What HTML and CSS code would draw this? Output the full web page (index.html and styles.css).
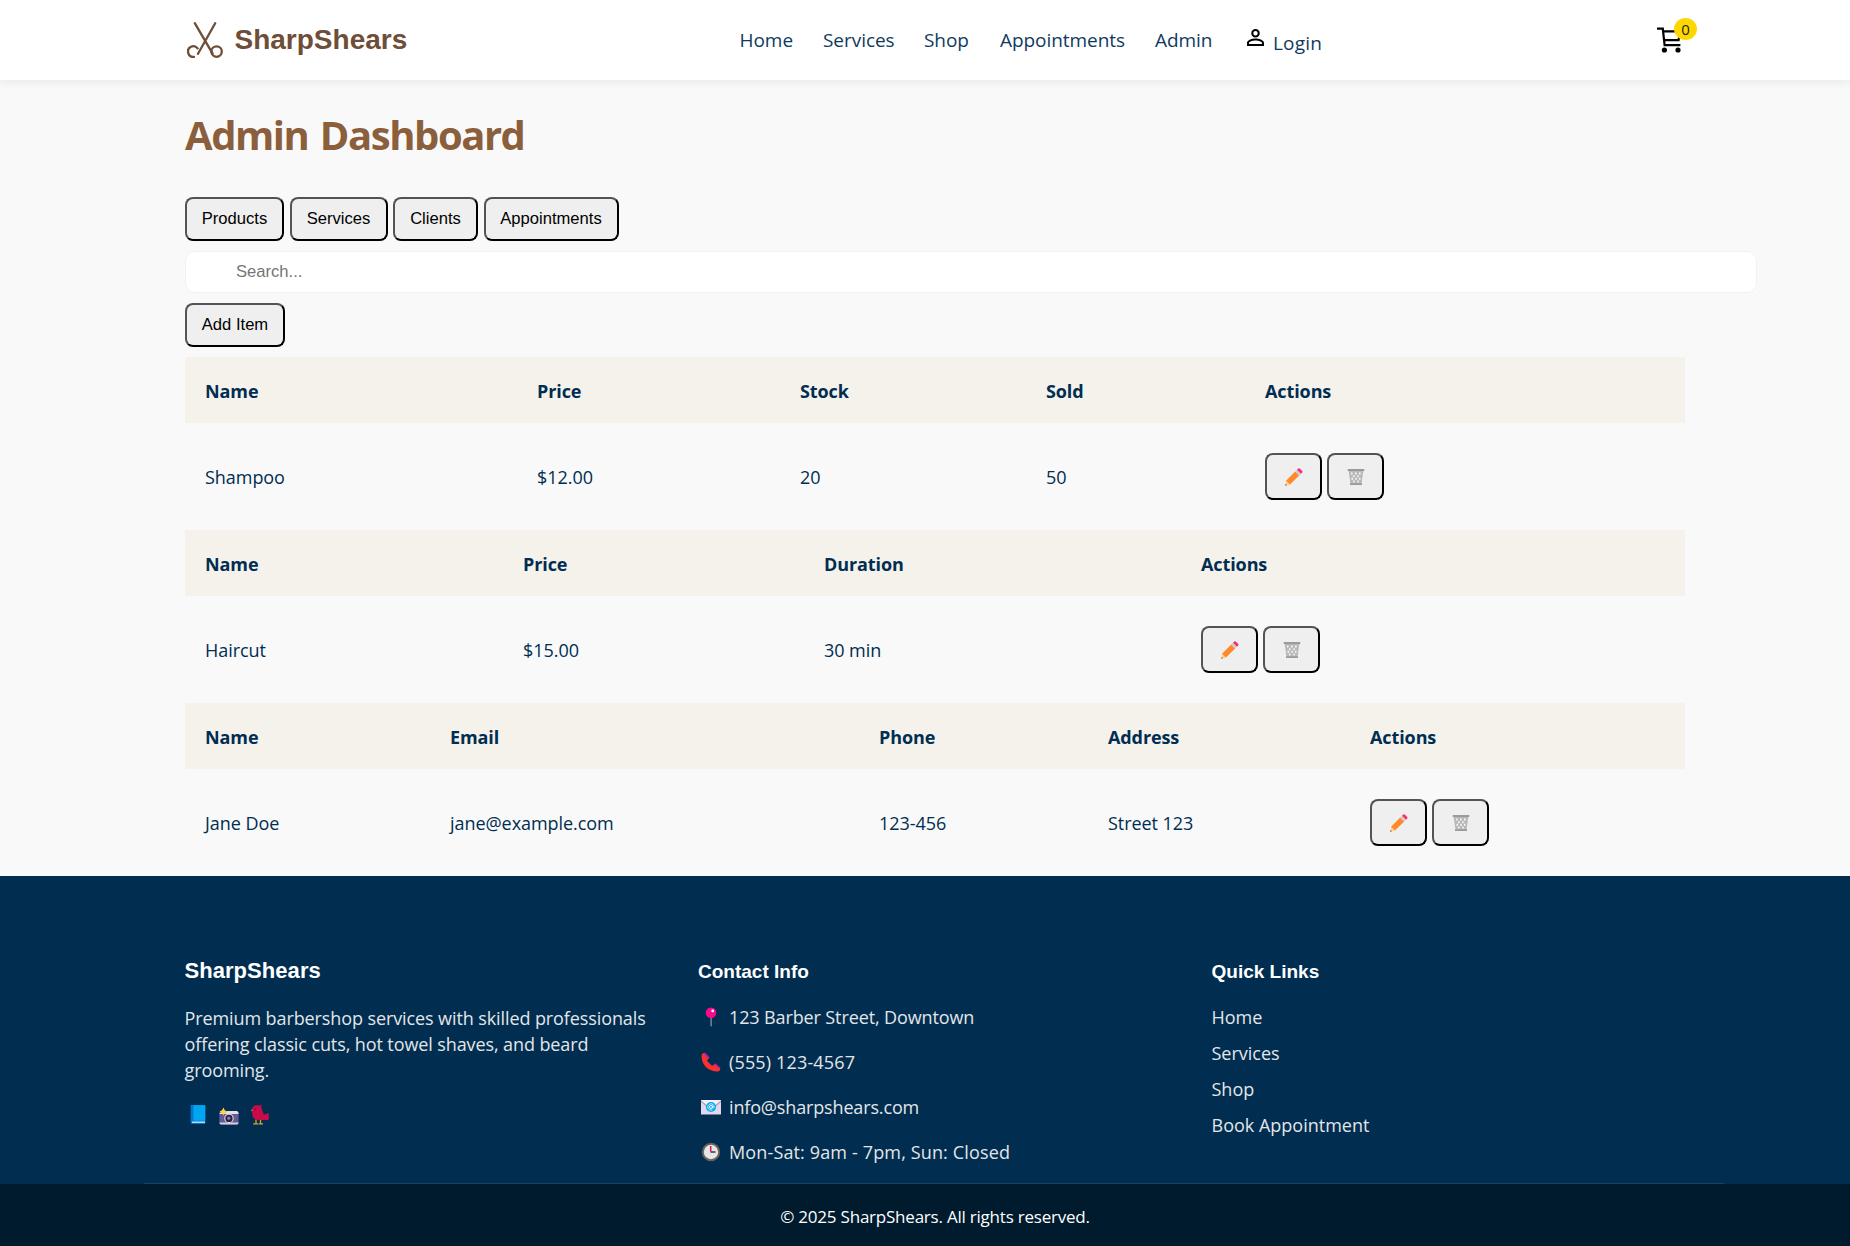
FILE: index.html
```html
<!DOCTYPE html>
<html lang="en">
<head>
<meta charset="utf-8">
<title>SharpShears - Admin Dashboard</title>
<link rel="stylesheet" href="styles.css">
</head>
<body>
<svg class="sprite" width="0" height="0" aria-hidden="true">
  <symbol id="pencil" viewBox="0 0 18 18">
    <path d="M1 12.5 4.8 16.2 1 17.5z" fill="#ffc983"/>
    <path d="M1 12.7 10.2 3.6 14.2 7.6 5 16.6z" fill="#ff8a2b"/>
    <path d="M1 12.7 5 16.6 3 17 1 16.3z" fill="#ffce7c"/>
    <path d="M.4 16 1.9 17.3.4 17.8z" fill="#444"/>
    <path d="M10.2 3.6 12 1.8 16 5.8 14.2 7.6z" fill="#cfc8d8"/>
    <path d="M12 1.8 13.4.6q.8-.6 1.6.1l2.2 2.2q.7.8 0 1.6L16 5.8z" fill="#fc2f63"/>
  </symbol>
  <symbol id="trash" viewBox="0 0 18 18">
    <path d="M1.6 2.5H16.4L14.4 16.5H3.6z" fill="#b8b8b8"/>
    <path d="M4 4.5h1.5v2H4zM8 4.5h1.7v2H8zM12 4.5h1.7v2H12zM6 7.2h1.5v2H6zM10.3 7.2h1.500v2h-1.500zM4.5 9.8H6v2H4.5zM8.2 9.800h1.600v2H8.200zM12 9.800h1.500v2H12zM6 12.400h1.500v2H6zM10.300 12.400h1.500v2h-1.500z" fill="#f7f7f7"/>
    <path d="M.7 1h16.6v1.9H.7zM3 15.2h12v1.9H3z" fill="#9b9b9b"/>
  </symbol>
</svg>

<header class="header">
  <div class="header-inner">
    <a class="logo">
      <svg class="logo-icon" viewBox="0 0 36 36" fill="none" stroke="#6f4e37" stroke-width="2.3" stroke-linecap="round">
        <path d="M7.8 1.200 25.600 31.600M28.200 1.200 11 31.800"/>
        <circle cx="29.600" cy="29.600" r="5.200"/>
        <path d="M7 34.800A5.300 5.300 0 1 1 10.600 26.400"/>
      </svg>
      <span>SharpShears</span>
    </a>
    <nav class="nav">
      <a class="n1">Home</a><a class="n2">Services</a><a class="n3">Shop</a><a class="n4">Appointments</a><a class="n5">Admin</a>
      <a class="login">
        <svg class="user-icon" viewBox="4 4 16 16"><path d="M12 5.9a2.1 2.1 0 1 1 0 4.2 2.1 2.1 0 0 1 0-4.2m0 9c2.97 0 6.1 1.46 6.1 2.1v1.1H5.9V17c0-.64 3.13-2.1 6.1-2.1M12 4C9.79 4 8 5.79 8 8s1.79 4 4 4 4-1.79 4-4-1.79-4-4-4m0 9c-2.67 0-8 1.34-8 4v3h16v-3c0-2.66-5.33-4-8-4"/></svg><span>Login</span>
      </a>
    </nav>
    <a class="cart">
      <svg class="cart-icon" viewBox="0 0 24 26">
        <path d="M0 1.6H5.8L7.600 18.200H23.400M6 4.400H23L21.600 13.200H7" fill="none" stroke="#000" stroke-width="2.200"/>
        <circle cx="7.400" cy="23" r="2.600"/><circle cx="21" cy="23" r="2.600"/>
      </svg>
      <span class="badge">0</span>
    </a>
  </div>
</header>

<main class="main">
  <h1>Admin Dashboard</h1>
  <div class="tabs">
    <button class="w1">Products</button><button class="w2">Services</button><button class="w3">Clients</button><button class="w4">Appointments</button>
  </div>
  <input class="search" type="text" placeholder="Search...">
  <button class="add">Add Item</button>

  <table>
    <colgroup><col class="a1"><col class="a2"><col class="a3"><col class="a4"><col></colgroup>
    <thead><tr><th>Name</th><th>Price</th><th>Stock</th><th>Sold</th><th>Actions</th></tr></thead>
    <tbody><tr><td>Shampoo</td><td>$12.00</td><td>20</td><td>50</td>
      <td><div class="actions"><button><svg><use href="#pencil"/></svg></button><button><svg><use href="#trash"/></svg></button></div></td></tr></tbody>
  </table>
  <table>
    <colgroup><col class="b1"><col class="b2"><col class="b3"><col></colgroup>
    <thead><tr><th>Name</th><th>Price</th><th>Duration</th><th>Actions</th></tr></thead>
    <tbody><tr><td>Haircut</td><td>$15.00</td><td>30 min</td>
      <td><div class="actions"><button><svg><use href="#pencil"/></svg></button><button><svg><use href="#trash"/></svg></button></div></td></tr></tbody>
  </table>
  <table>
    <colgroup><col class="c1"><col class="c2"><col class="c3"><col class="c4"><col></colgroup>
    <thead><tr><th>Name</th><th>Email</th><th>Phone</th><th>Address</th><th>Actions</th></tr></thead>
    <tbody><tr><td>Jane Doe</td><td>jane@example.com</td><td>123-456</td><td>Street 123</td>
      <td><div class="actions"><button><svg><use href="#pencil"/></svg></button><button><svg><use href="#trash"/></svg></button></div></td></tr></tbody>
  </table>
</main>

<footer class="footer">
  <div class="footer-grid">
    <section class="about">
      <h3>SharpShears</h3>
      <p>Premium barbershop services with skilled professionals<br>offering classic cuts, hot towel shaves, and beard<br>grooming.</p>
      <div class="social">
        <svg viewBox="0 0 20 20"><path d="M2.6 0H17v19H4.200q-1.600 0-1.600-1.600z" fill="#0078c8"/><path d="M5.400.2H17.400V15.800H5.400z" fill="#00a6f0"/><path d="M4 16.600H17.200v1.200H4z" fill="#e8f2fa"/></svg>
        <svg viewBox="0 0 20 20"><path d="M.4 7.400H19.600V18q0 1.400-1.400 1.400H1.800Q.4 19.400.4 18z" fill="#635994"/><path d="M.4 9q0-1.800 1.800-1.800H7L8 6h9.500q2 0 2.100 3z" fill="#e4e0e8"/><path d="M.4 17.600H19.600q0 1.800-1.400 1.800H1.800q-1.400 0-1.400-1.800z" fill="#d6cfdc"/><circle cx="10" cy="13.400" r="4.800" fill="#d7d0df"/><circle cx="10" cy="13.400" r="3.600" fill="#2a2240"/><circle cx="9.800" cy="13.200" r="1.600" fill="#8d7dbd"/><path d="M4.400 2.600 5.800 5.200 8.400 6.500 5.800 7.800 4.400 10.400 3 7.800.4 6.500 3 5.200z" fill="#ffd13b"/></svg>
        <svg viewBox="0 0 20 20"><path d="M6 14.500V18.600M10.500 14.500V18.600M3.200 18.800H8M8.500 18.800H13" stroke="#dba32b" stroke-width="1.300" fill="none"/><path d="M.8 5.200 3 3.700V6.500z" fill="#ffc52e"/><path d="M5.800.2H12q-1.200 1-.4 3L13.800 9.800 18.800 8V14.400Q18 15.400 14.800 15H8Q2.400 14.600 2.200 9V4Q2.600.6 5.800.2" fill="#ca0b4a"/><circle cx="5.400" cy="4.200" r=".8" fill="#1c1c1c"/></svg>
      </div>
    </section>
    <section>
      <h4>Contact Info</h4>
      <ul class="contact">
        <li><svg viewBox="0 0 20 20"><path d="M9.500 9h1.200V19.200H9.500z" fill="#9c9aa3"/><circle cx="10" cy="5.800" r="5.300" fill="#f70a8d"/><circle cx="11.700" cy="3.900" r="1.400" fill="#fff"/></svg><span class="address">123 Barber Street, Downtown</span></li>
        <li><svg viewBox="0 0 20 20"><path d="M2 1.200 4 .4 8.600 5.400 6.500 8zM12.300 13 14.300 11.200 19.500 15.800 18.600 18z" fill="#b4249b"/><path d="M.8 2.600Q1.600.9 2.600 1.300L7 6.800Q5.600 8.400 6.600 9.500L10.700 13.400Q12 14 13.200 12.800L19 17Q19.500 19 17 19.400 9.500 19.500 4.500 14.700-.4 9 .8 2.600" fill="#f8312f"/></svg><span class="phone">(555) 123-4567</span></li>
        <li><svg viewBox="0 0 20 20"><path d="M0 3H20V17.500H0z" fill="#e1d8ec"/><path d="M0 3 10 11 20 3V5L12 12.500H8L0 5z" fill="#b4acbc"/><path d="M0 3H20L12 10H8z" fill="#f3eef8"/><circle cx="10" cy="10" r="5" fill="#00a6ed"/><circle cx="10" cy="10" r="1.500" fill="none" stroke="#fff"/><path d="M11.600 8.500V10.600Q12.800 12 13.200 10A3.200 3.200 0 1 0 11.500 12.800" fill="none" stroke="#fff" stroke-width=".8"/></svg><span class="email">info@sharpshears.com</span></li>
        <li><svg viewBox="0 0 20 20"><circle cx="10" cy="10" r="9.200" fill="#68625f"/><circle cx="10" cy="10" r="7.200" fill="#e6e6e6"/><path d="M9.700 4V9.500" stroke="#f70a55" stroke-width="1.500"/><path d="M9.500 10H14.500" stroke="#222" stroke-width="1.300"/></svg><span class="hours">Mon-Sat: 9am - 7pm, Sun: Closed</span></li>
      </ul>
    </section>
    <section>
      <h4>Quick Links</h4>
      <ul class="links"><li>Home</li><li>Services</li><li>Shop</li><li>Book Appointment</li></ul>
    </section>
  </div>
  <div class="footer-bottom"><p>© 2025 SharpShears. All rights reserved.</p></div>
</footer>
</body>
</html>
```

FILE: styles.css
```css
* { box-sizing: border-box; margin: 0; padding: 0; }
html { font-size: 18px; }
body {
  font-family: "Open Sans", "Noto Sans", sans-serif;
  font-size: 18px;
  letter-spacing: -0.05px;
  color: #002d52;
  background: #f9f9f9;
  overflow: hidden;
}
.sprite { display: block; }
ul { list-style: none; }

.header {
  position: relative;
  height: 80px;
  background: #fff;
  box-shadow: 0 2px 10px rgba(0, 0, 0, .07);
}
.header-inner { display: flex; height: 80px; padding-left: 187px; }
.logo {
  display: flex;
  align-items: center;
  width: 552.5px;
  font: bold 28px "Liberation Sans", Arial, sans-serif;
  letter-spacing: 0;
  color: #6f4e37;
}
.logo-icon { width: 36px; height: 36px; margin-right: 11.5px; }
.nav { display: flex; width: 917.5px; font-size: 19px; line-height: 80px; gap: 30px; color: #0f3a60; }
.nav a { white-space: nowrap; }
.n1 { width: 53.5px; }
.n2 { width: 71px; }
.n3 { width: 46px; }
.n4 { width: 125px; }
.n5 { width: 58px; }
.login { display: flex; padding-left: 4px; line-height: 86px; letter-spacing: .2px; }
.user-icon { width: 17px; height: 17px; margin: 29px 9px 0 0; fill: #000; }
.cart { position: relative; width: 40px; }
.cart-icon { display: block; width: 24px; height: 26px; margin-top: 27px; }
.badge {
  position: absolute;
  left: 17px;
  top: 18px;
  width: 23px;
  height: 22px;
  border-radius: 50%;
  background: #ffd700;
  color: #222;
  font-size: 15px;
  line-height: 22px;
  text-align: center;
}

.main { width: 1500px; margin-left: 185px; }
h1 { padding-top: 24px; height: 117px; font-size: 40px; line-height: 61px; letter-spacing: -1.45px; word-spacing: 2.5px; color: #8b5e3c; }
button {
  display: block;
  height: 44px;
  border: 2px outset #000;
  border-radius: 8px;
  background: #efefef;
  color: #000;
  font: 16.6px "Liberation Sans", Arial, sans-serif;
  text-align: center;
  white-space: nowrap;
}
.tabs { display: flex; gap: 5.5px; }
.w1 { width: 99px; }
.w2 { width: 98px; }
.w3 { width: 85px; }
.w4 { width: 135px; }
.search {
  display: block;
  width: 1572px;
  height: 42px;
  margin: 10px 0;
  padding: 0 50px;
  border: 1px solid #f5f2eb;
  border-radius: 10px;
  background: #fff;
  font: 16.6px "Liberation Sans", Arial, sans-serif;
}
.search::placeholder { color: #757575; }
.add { width: 100px; margin-bottom: 10px; }

table { width: 1500px; table-layout: fixed; border-collapse: collapse; }
th, td { padding: 0 20px; text-align: left; white-space: nowrap; }
th { height: 66px; padding-top: 2px; background: #f5f2eb; font-weight: bold; letter-spacing: -0.1px; }
td { height: 107px; }
.a1 { width: 332px; } .a2 { width: 263px; } .a3 { width: 246px; } .a4 { width: 219px; }
.b1 { width: 318px; } .b2 { width: 301px; } .b3 { width: 377px; }
.c1 { width: 245px; } .c2 { width: 429px; } .c3 { width: 229px; } .c4 { width: 262px; }
.actions { display: flex; gap: 5px; }
.actions button { width: 57px; height: 47px; padding: 0 17.5px; }
.actions svg { display: block; width: 18px; height: 18px; }

.footer { background: #002d50; color: #e3e6e8; }
.footer-grid {
  display: grid;
  grid-template-columns: repeat(3, 1fr);
  gap: 40px;
  height: 308px;
  margin: 0 126px 0 144px;
  padding: 81px 39px 0 40.5px;
  border-bottom: 1px solid #1a4262;
}
.footer h3, .footer h4 {
  height: 48px;
  font: bold 22px/28px "Liberation Sans", Arial, sans-serif;
  letter-spacing: .05px;
  color: #fff;
}
.footer h4 { font-size: 19px; line-height: 30px; height: 37px; letter-spacing: 0; }
.about p { line-height: 26px; white-space: nowrap; letter-spacing: -0.1px; }
.social { display: flex; gap: 11px; padding: 22px 0 0 3px; }
.social svg { width: 20px; height: 20px; }
.contact li { display: flex; align-items: center; height: 45px; white-space: nowrap; }
.contact svg { width: 20px; height: 20px; margin: 0 8px 0 3px; }
.address { letter-spacing: -0.12px; }
.phone { letter-spacing: .15px; }
.email { letter-spacing: -0.15px; }
.hours { letter-spacing: .14px; }
.links { padding-top: 1px; }
.links li { height: 36px; line-height: 45px; letter-spacing: 0; }
.footer-bottom { height: 62px; background: #001b2d; }
.footer-bottom p { width: 1500px; margin-left: 185px; font-size: 17px; line-height: 65px; letter-spacing: -0.22px; text-align: center; color: #fff; }
```
